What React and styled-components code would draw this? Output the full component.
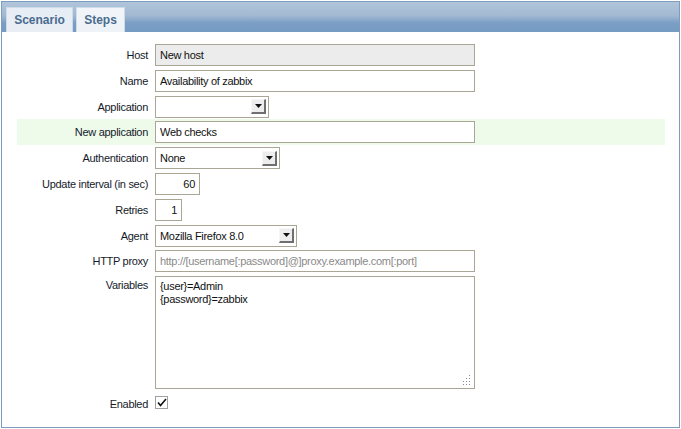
import React from 'react';
import styled, { createGlobalStyle } from 'styled-components';

const GlobalStyle = createGlobalStyle`
  body {
    margin: 0;
    background: #fff;
    font-family: "Liberation Sans", Arial, sans-serif;
    font-size: 11px;
    letter-spacing: -0.3px;
    color: #111;
  }
`;

const Frame = styled.div`
  width: 679px;
  height: 427px;
  margin: 1px 0 0 1px;
  border: 1px solid #7d9dbe;
  border-top: none;
  box-sizing: border-box;
  display: flex;
  flex-direction: column;
`;

const Header = styled.div`
  height: 31px;
  border-top: 1px solid #7d9dbe;
  background: linear-gradient(#b0c5da 0%, #a2b9d2 45%, #7a9ec4 70%, #769bc2 100%);
  display: flex;
  align-items: flex-end;
  padding-left: 4px;
  gap: 3px;
  box-sizing: border-box;
`;

const Tab = styled.div`
  height: 25px;
  box-sizing: border-box;
  border: 1px solid #cfdbe7;
  border-bottom: none;
  background: ${p => (p.$active ? 'linear-gradient(#e6edf4, #e9eff5)' : 'linear-gradient(#f1f5f9, #eef3f8)')};
  color: #4a6b8f;
  font-weight: bold;
  font-size: 12px;
  letter-spacing: 0;
  display: flex;
  align-items: center;
  justify-content: center;
  width: ${p => p.$w}px;
`;

const Form = styled.div`
  padding: 10px 14px 0 15px;
  display: flex;
  flex-direction: column;
`;

const Row = styled.div`
  display: grid;
  grid-template-columns: 131px 1fr;
  column-gap: 7px;
  align-items: ${p => (p.$top ? 'start' : 'center')};
  padding: ${p => p.$pad || '2px 0 1.8px'};
  min-height: 22px;
  background: ${p => (p.$highlight ? '#eefbea' : 'transparent')};
`;

const Label = styled.div`
  text-align: right;
  color: #151a2a;
  padding-top: ${p => (p.$top ? '3px' : '0')};
`;

const Input = styled.div`
  width: ${p => p.$w}px;
  height: 22px;
  box-sizing: border-box;
  border: 1px solid #aaa696;
  background: ${p => (p.$disabled ? '#ececec' : '#fff')};
  color: ${p => (p.$placeholder ? '#8a8a8a' : '#111')};
  padding: 0 4px;
  display: flex;
  align-items: center;
  justify-content: ${p => (p.$right ? 'flex-end' : 'flex-start')};
  white-space: nowrap;
  overflow: hidden;
`;

const Select = styled.div`
  width: ${p => p.$w}px;
  height: 22px;
  box-sizing: border-box;
  border: 1px solid #aaa696;
  background: #fff;
  padding: 0 2px 0 4px;
  display: flex;
  align-items: center;
  justify-content: space-between;
`;

const ArrowBtn = styled.div`
  width: 15px;
  height: 15px;
  box-sizing: border-box;
  background: #ededed;
  border-top: 1px solid #f6f6f6;
  border-left: 1px solid #f6f6f6;
  border-right: 2px solid #6f6f6f;
  border-bottom: 2px solid #6f6f6f;
  display: flex;
  align-items: center;
  justify-content: center;
`;

const TextArea = styled.div`
  width: 320px;
  height: 113px;
  box-sizing: border-box;
  border: 1px solid #aaa696;
  padding: 3px 4px;
  line-height: 13px;
  position: relative;
`;

const Grip = styled.svg`
  position: absolute;
  right: 3px;
  bottom: 3px;
`;

const Check = styled.div`
  width: 13px;
  height: 13px;
  box-sizing: border-box;
  border: 1px solid #a0a0a0;
  background: #fff;
  display: flex;
  align-items: center;
  justify-content: center;
  margin-top: -3px;
`;

const Arrow = () => (
  <ArrowBtn>
    <svg width="7" height="4" viewBox="0 0 7 4">
      <path d="M0 0h7L3.5 4z" fill="#111" />
    </svg>
  </ArrowBtn>
);

const gripDots = [[8, 0], [8, 3], [5, 3], [8, 6], [5, 6], [2, 6], [8, 9], [5, 9], [2, 9], [-1, 9]];

export default function App() {
  return (
    <>
      <GlobalStyle />
      <Frame>
        <Header>
          <Tab $active $w={67}>Scenario</Tab>
          <Tab $w={49}>Steps</Tab>
        </Header>
        <Form>
          <Row>
            <Label>Host</Label>
            <Input $w={320} $disabled>New host</Input>
          </Row>
          <Row>
            <Label>Name</Label>
            <Input $w={320}>Availability of zabbix</Input>
          </Row>
          <Row>
            <Label>Application</Label>
            <Select $w={114}><span /><Arrow /></Select>
          </Row>
          <Row $highlight>
            <Label>New application</Label>
            <Input $w={320}>Web checks</Input>
          </Row>
          <Row>
            <Label>Authentication</Label>
            <Select $w={125}><span>None</span><Arrow /></Select>
          </Row>
          <Row>
            <Label>Update interval (in sec)</Label>
            <Input $w={45} $right>60</Input>
          </Row>
          <Row>
            <Label>Retries</Label>
            <Input $w={27} $right>1</Input>
          </Row>
          <Row>
            <Label>Agent</Label>
            <Select $w={142}><span>Mozilla Firefox 8.0</span><Arrow /></Select>
          </Row>
          <Row>
            <Label>HTTP proxy</Label>
            <Input $w={320} $placeholder>http://[username[:password]@]proxy.example.com[:port]</Input>
          </Row>
          <Row $top>
            <Label $top>Variables</Label>
            <TextArea>
              {'{user}=Admin'}<br />{'{password}=zabbix'}
              <Grip width="10" height="10" viewBox="0 0 10 10">
                {gripDots.map(([x, y], i) => (
                  <rect key={i} x={x} y={y} width="1" height="1" fill="#888" />
                ))}
              </Grip>
            </TextArea>
          </Row>
          <Row $pad="2px 0 0">
            <Label>Enabled</Label>
            <Check>
              <svg width="10" height="9" viewBox="0 0 10 9">
                <path d="M1 4.5l2.5 3L9 1" stroke="#111" strokeWidth="1.6" fill="none" />
              </svg>
            </Check>
          </Row>
        </Form>
      </Frame>
    </>
  );
}
